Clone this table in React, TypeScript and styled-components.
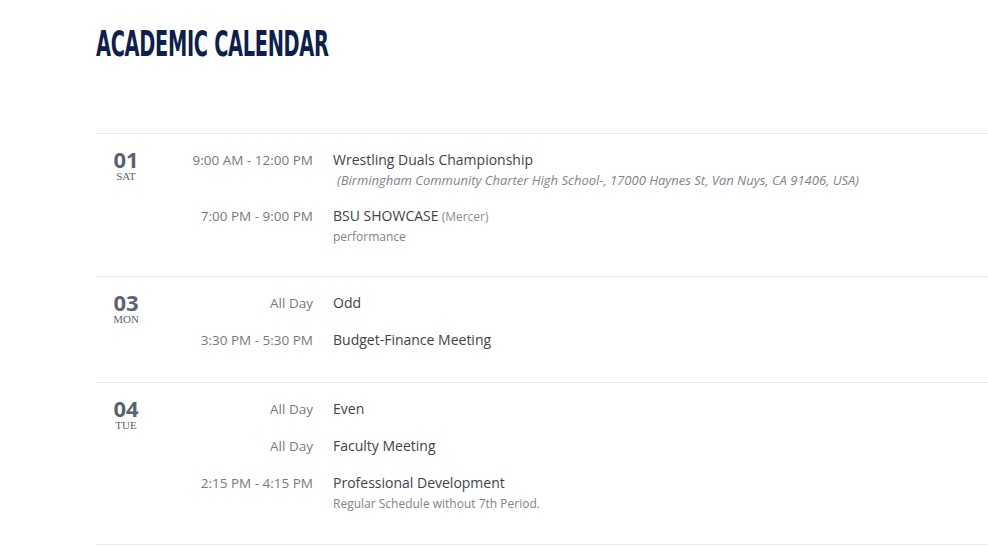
import React from "react";
import styled, { createGlobalStyle } from "styled-components";

const Global = createGlobalStyle`
  html, body { margin: 0; padding: 0; background: #fff; }
  body { font-family: "Open Sans", "Liberation Sans", sans-serif; }
`;

const Page = styled.div`
  padding: 0 0 0 96px;
  width: 988px;
  box-sizing: border-box;
`;

const Heading = styled.h1`
  margin: 0;
  padding-top: 24px;
  height: 133px;
  box-sizing: border-box;
  font-family: "DejaVu Sans Condensed", "Liberation Sans", sans-serif;
  font-weight: bold;
  font-size: 35px;
  line-height: 40px;
  color: #0f1f4b;
  letter-spacing: -0.5px;
  white-space: nowrap;
  span {
    display: inline-block;
    transform: scaleX(0.615);
    transform-origin: left center;
  }
`;

const Day = styled.section`
  display: grid;
  grid-template-columns: 60px 1fr;
  border-top: 1px solid #eaeaea;
  padding: 16px 0 32px;
  &:last-of-type { border-bottom: 1px solid #eaeaea; }
`;

const DateCol = styled.div`
  text-align: center;
  color: #5c6370;
  margin-top: -2px;
`;

const DayNum = styled.div`
  font-family: "Open Sans", sans-serif;
  font-weight: 700;
  font-size: 22px;
  line-height: 22px;
`;

const DayName = styled.div`
  font-family: "Liberation Serif", "DejaVu Serif", serif;
  font-size: 11px;
  line-height: 12px;
  text-transform: uppercase;
`;

const Events = styled.div`
  display: flex;
  flex-direction: column;
  gap: 17px;
`;

const Event = styled.div`
  display: grid;
  grid-template-columns: 157px 1fr;
  column-gap: 20px;
`;

const Time = styled.div`
  text-align: right;
  font-size: 13.5px;
  line-height: 20px;
  color: #777a80;
`;

const Info = styled.div``;

const Title = styled.div`
  font-size: 14px;
  line-height: 20px;
  color: #3f4248;
`;

const Venue = styled.span`
  font-size: 12px;
  line-height: 1;
  color: #8a8d92;
`;

const Sub = styled.div<{ $italic?: boolean }>`
  margin-top: 3px;
  font-size: ${(p) => (p.$italic ? "13px" : "12px")};
  line-height: 15.5px;
  color: #80838a;
  font-style: ${(p) => (p.$italic ? "italic" : "normal")};
  padding-left: ${(p) => (p.$italic ? "4px" : "0")};
`;

type Ev = { time: string; title: string; venue?: string; sub?: string; italic?: boolean };
type DayT = { num: string; name: string; events: Ev[] };

const days: DayT[] = [
  {
    num: "01",
    name: "Sat",
    events: [
      {
        time: "9:00 AM - 12:00 PM",
        title: "Wrestling Duals Championship",
        sub: "(Birmingham Community Charter High School-, 17000 Haynes St, Van Nuys, CA 91406, USA)",
        italic: true,
      },
      { time: "7:00 PM - 9:00 PM", title: "BSU SHOWCASE", venue: "(Mercer)", sub: "performance" },
    ],
  },
  {
    num: "03",
    name: "Mon",
    events: [
      { time: "All Day", title: "Odd" },
      { time: "3:30 PM - 5:30 PM", title: "Budget-Finance Meeting" },
    ],
  },
  {
    num: "04",
    name: "Tue",
    events: [
      { time: "All Day", title: "Even" },
      { time: "All Day", title: "Faculty Meeting" },
      {
        time: "2:15 PM - 4:15 PM",
        title: "Professional Development",
        sub: "Regular Schedule without 7th Period.",
      },
    ],
  },
];

export default function App() {
  return (
    <>
      <Global />
      <Page>
        <Heading>
          <span>ACADEMIC CALENDAR</span>
        </Heading>
        {days.map((d) => (
          <Day key={d.num}>
            <DateCol>
              <DayNum>{d.num}</DayNum>
              <DayName>{d.name}</DayName>
            </DateCol>
            <Events>
              {d.events.map((e, i) => (
                <Event key={i}>
                  <Time>{e.time}</Time>
                  <Info>
                    <Title>
                      {e.title}
                      {e.venue && <Venue> {e.venue}</Venue>}
                    </Title>
                    {e.sub && <Sub $italic={e.italic}>{e.sub}</Sub>}
                  </Info>
                </Event>
              ))}
            </Events>
          </Day>
        ))}
      </Page>
    </>
  );
}
